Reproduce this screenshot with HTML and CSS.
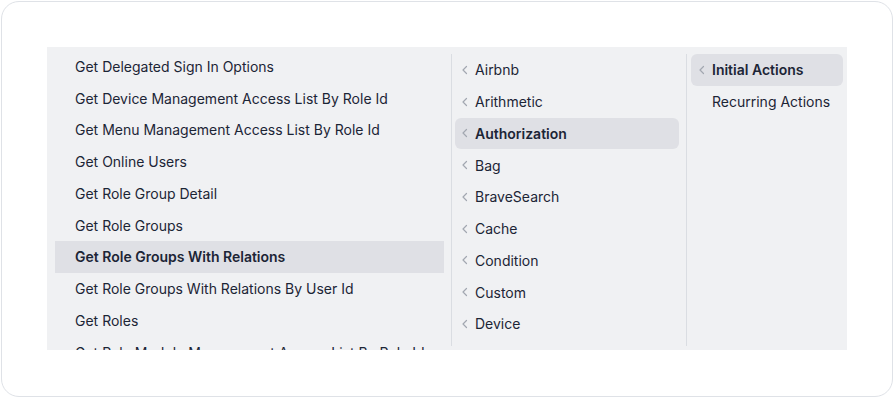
FILE: index.html
```html
<!DOCTYPE html>
<html lang="en">
  <head>
    <meta charset="utf-8" />
    <meta name="viewport" content="width=device-width,initial-scale=1.0" />
    <title>Action picker</title>
    <link rel="stylesheet" href="styles.css">
  </head>
  <body>
    <div class="card">
      <div class="panel">
        <div class="col col-methods">
          <ul class="list scrolled">
            <li class="item">Get Delegated Sign In Options</li>
            <li class="item">Get Device Management Access List By Role Id</li>
            <li class="item">Get Menu Management Access List By Role Id</li>
            <li class="item">Get Online Users</li>
            <li class="item">Get Role Group Detail</li>
            <li class="item">Get Role Groups</li>
            <li class="item active">Get Role Groups With Relations</li>
            <li class="item">Get Role Groups With Relations By User Id</li>
            <li class="item">Get Roles</li>
            <li class="item">Get Role Module Management Access List By Role Id</li>
          </ul>
        </div>
        <div class="divider"></div>
        <div class="col col-groups">
          <ul class="list">
            <li class="item"><svg class="chev" viewBox="0 0 8 10"><polyline points="5.5,1.5 2,5 5.5,8.5" /></svg>Airbnb</li>
            <li class="item"><svg class="chev" viewBox="0 0 8 10"><polyline points="5.5,1.5 2,5 5.5,8.5" /></svg>Arithmetic</li>
            <li class="item active"><svg class="chev" viewBox="0 0 8 10"><polyline points="5.5,1.5 2,5 5.5,8.5" /></svg>Authorization</li>
            <li class="item"><svg class="chev" viewBox="0 0 8 10"><polyline points="5.5,1.5 2,5 5.5,8.5" /></svg>Bag</li>
            <li class="item"><svg class="chev" viewBox="0 0 8 10"><polyline points="5.5,1.5 2,5 5.5,8.5" /></svg>BraveSearch</li>
            <li class="item"><svg class="chev" viewBox="0 0 8 10"><polyline points="5.5,1.5 2,5 5.5,8.5" /></svg>Cache</li>
            <li class="item"><svg class="chev" viewBox="0 0 8 10"><polyline points="5.5,1.5 2,5 5.5,8.5" /></svg>Condition</li>
            <li class="item"><svg class="chev" viewBox="0 0 8 10"><polyline points="5.5,1.5 2,5 5.5,8.5" /></svg>Custom</li>
            <li class="item"><svg class="chev" viewBox="0 0 8 10"><polyline points="5.5,1.5 2,5 5.5,8.5" /></svg>Device</li>
          </ul>
        </div>
        <div class="divider"></div>
        <div class="col col-kinds">
          <ul class="list">
            <li class="item active"><svg class="chev" viewBox="0 0 8 10"><polyline points="5.5,1.5 2,5 5.5,8.5" /></svg>Initial Actions</li>
            <li class="item"><span class="chev-space"></span>Recurring Actions</li>
          </ul>
        </div>
      </div>
    </div>
  </body>
</html>
```

FILE: styles.css
```css
* {
  box-sizing: border-box;
}
body {
  margin: 0;
  background: #fff;
  font-family: Inter, "Liberation Sans", sans-serif;
  font-size: 14px;
  color: #1c2536;
}
.card {
  margin: 1px;
  height: 396px;
  border: 1px solid #dfe2e7;
  border-radius: 18px;
  padding: 45px;
}
.panel {
  display: flex;
  height: 303px;
  background: #f0f1f3;
  overflow: hidden;
}
.divider {
  width: 1px;
  margin: 7px 0 4px;
  background: #dadde2;
}
.col {
  overflow: hidden;
}
.list {
  list-style: none;
  margin: 0;
  padding: 0;
}
.item {
  display: flex;
  align-items: center;
  height: 31.75px;
  white-space: nowrap;
  overflow: hidden;
}
.item.active {
  background: #dfe0e5;
  font-weight: 600;
}

/* left: method names, list is scrolled a bit */
.col-methods {
  width: 404px;
  padding: 0 7px 0 8px;
}
.col-methods .list {
  margin-top: 3.5px;
}
.col-methods .item {
  padding-left: 20px;
}

/* middle: groups */
.col-groups {
  width: 234px;
  padding: 7px 7px 0 3px;
}
.col-groups .item {
  padding-left: 6px;
  border-radius: 6px;
}

/* right: kinds */
.col-kinds {
  width: 160px;
  padding: 7px 4px 0 4px;
}
.col-kinds .item {
  padding-left: 7px;
  border-radius: 6px;
}

.chev {
  width: 8px;
  height: 10px;
  margin-right: 6px;
  flex: none;
  fill: none;
  stroke: #a2a7b0;
  stroke-width: 1.2;
  stroke-linecap: round;
  stroke-linejoin: round;
}
.chev-space {
  display: inline-block;
  width: 14px;
  flex: none;
}
```
